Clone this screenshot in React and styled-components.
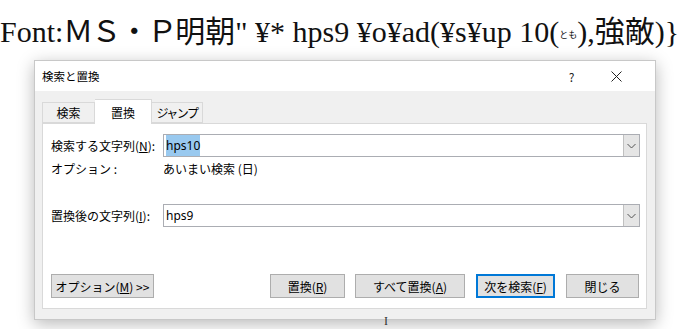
import React from "react";
import styled, { createGlobalStyle } from "styled-components";

const GlobalStyle = createGlobalStyle`
  html, body {
    margin: 0;
    padding: 0;
    background: #ffffff;
  }
  body {
    width: 681px;
    height: 329px;
    overflow: hidden;
  }
`;

const Page = styled.div`
  position: relative;
  width: 681px;
  height: 329px;
  overflow: hidden;
  background: #fff;
`;

const FieldCode = styled.div`
  height: 60px;
  box-sizing: border-box;
  padding-top: 17px;
  font-family: "Liberation Serif", "Noto Sans CJK JP", serif;
  font-size: 30px;
  line-height: 30px;
  color: #111;
  white-space: nowrap;
  overflow: hidden;
`;

const Wide = styled.span`
  letter-spacing: -2px;
`;

const Tiny = styled.span`
  font-size: 9px;
  font-family: "Noto Sans CJK JP", sans-serif;
  vertical-align: 4px;
`;

const Dialog = styled.div`
  margin-left: 34px;
  width: 622px;
  height: 260px;
  box-sizing: border-box;
  background: #f0f0f0;
  border: 1px solid #c8c8c8;
  box-shadow: 0 4px 16px rgba(0, 0, 0, 0.28);
  font-family: "Noto Sans", "Noto Sans CJK JP", sans-serif;
  font-size: 12px;
  color: #000;
  display: flex;
  flex-direction: column;
`;

const TitleBar = styled.div`
  height: 30px;
  background: #fff;
  display: flex;
  align-items: center;
  padding-left: 7px;
  padding-right: 16px;
  font-family: "Noto Sans CJK JP", sans-serif;
  font-size: 11.5px;
`;

const Title = styled.span`
  flex: 1;
`;

const TitleButton = styled.span`
  width: 45px;
  display: flex;
  justify-content: center;
  align-items: center;
  font-size: 12px;
  color: #222;
`;

const Body = styled.div`
  padding: 8px 8px 0 7px;
`;

const Tabs = styled.div`
  display: flex;
  align-items: flex-end;
  height: 24px;
`;

const Tab = styled.div`
  width: ${p => p.$w}px;
  height: ${p => (p.$active ? 25 : 21)}px;
  box-sizing: border-box;
  margin-bottom: ${p => (p.$active ? -1 : 0)}px;
  background: ${p => (p.$active ? "#fff" : "#f0f0f0")};
  border: 1px solid #d9d9d9;
  border-bottom: ${p => (p.$active ? "none" : "1px solid #d9d9d9")};
  border-left: ${p => (p.$noLeft ? "none" : "1px solid #d9d9d9")};
  display: flex;
  align-items: center;
  justify-content: center;
  font-family: "Noto Sans CJK JP", sans-serif;
  font-size: 12px;
  letter-spacing: ${p => p.$ls || 0}px;
  white-space: nowrap;
  position: relative;
  z-index: ${p => (p.$active ? 2 : 1)};
`;

const Panel = styled.div`
  height: 186px;
  box-sizing: border-box;
  background: #fff;
  border: 1px solid #d9d9d9;
  padding: 10px 6px 0 8px;
  display: flex;
  flex-direction: column;
  position: relative;
  z-index: 1;
`;

const Row = styled.div`
  display: grid;
  grid-template-columns: 112px 1fr;
  align-items: center;
  height: ${p => p.$h}px;
  margin-top: ${p => p.$mt || 0}px;
`;

const Label = styled.span`
  font-family: "Noto Sans CJK JP", sans-serif;
  font-size: 12px;
  white-space: nowrap;
`;

const U = styled.span`
  text-decoration: underline;
`;

const Combo = styled.div`
  height: 23px;
  box-sizing: border-box;
  border: 1px solid #abadb3;
  background: #fff;
  display: flex;
  align-items: center;
`;

const ComboText = styled.div`
  flex: 1;
  padding-left: 2px;
  font-size: 12px;
`;

const Selected = styled.span`
  background: #99c9ef;
  padding: 2px 0;
`;

const ComboArrow = styled.div`
  width: 16px;
  height: 21px;
  box-sizing: border-box;
  background: #e5e5e5;
  border-left: 1px solid #c0c0c0;
  display: flex;
  align-items: center;
  justify-content: center;
`;

const Buttons = styled.div`
  display: flex;
  align-items: center;
  margin-top: auto;
  margin-bottom: 10px;
  padding-right: 1px;
`;

const Spacer = styled.div`
  flex: 1;
`;

const Button = styled.div`
  width: ${p => p.$w}px;
  height: 24px;
  box-sizing: border-box;
  margin-left: ${p => p.$ml || 0}px;
  background: #e1e1e1;
  border: ${p => (p.$default ? "2px solid #0078d7" : "1px solid #adadad")};
  display: flex;
  align-items: center;
  justify-content: center;
  font-family: "Noto Sans CJK JP", sans-serif;
  font-size: 12px;
  white-space: nowrap;
`;

const Cursor = styled.span`
  position: absolute;
  left: 384px;
  top: 315px;
  font-family: "Liberation Serif", serif;
  font-size: 12px;
  line-height: 12px;
  color: #333;
`;

const Chevron = () => (
  <svg width="9" height="6" viewBox="0 0 9 6">
    <path d="M0.5 1 L4.5 5 L8.5 1" fill="none" stroke="#555" strokeWidth="1" />
  </svg>
);

const CloseIcon = () => (
  <svg width="11" height="11" viewBox="0 0 11 11">
    <path d="M0.5 0.5 L10.5 10.5 M10.5 0.5 L0.5 10.5" fill="none" stroke="#222" strokeWidth="1" />
  </svg>
);

const App = () => (
  <Page>
    <GlobalStyle />
    <FieldCode>
      Font:<Wide>ＭＳ・Ｐ</Wide>明朝" ¥* hps9 ¥o¥ad(¥s¥up 10(<Tiny>とも</Tiny>),強敵)}
    </FieldCode>
    <Dialog>
      <TitleBar>
        <Title>検索と置換</Title>
        <TitleButton>?</TitleButton>
        <TitleButton>
          <CloseIcon />
        </TitleButton>
      </TitleBar>
      <Body>
        <Tabs>
          <Tab $w={53}>検索</Tab>
          <Tab $w={57} $active $noLeft>置換</Tab>
          <Tab $w={51} $ls={-1.5} $noLeft>ジャンプ</Tab>
        </Tabs>
        <Panel>
          <Row $h={23}>
            <Label>
              検索する文字列(<U>N</U>):
            </Label>
            <Combo>
              <ComboText>
                <Selected>hps10</Selected>
              </ComboText>
              <ComboArrow>
                <Chevron />
              </ComboArrow>
            </Combo>
          </Row>
          <Row $h={20} $mt={1}>
            <Label>オプション :</Label>
            <Label>あいまい検索 (日)</Label>
          </Row>
          <Row $h={23} $mt={26}>
            <Label>
              置換後の文字列(<U>I</U>):
            </Label>
            <Combo>
              <ComboText>hps9</ComboText>
              <ComboArrow>
                <Chevron />
              </ComboArrow>
            </Combo>
          </Row>
          <Buttons>
            <Button $w={103}>
              オプション(<U>M</U>) &gt;&gt;
            </Button>
            <Spacer />
            <Button $w={75}>
              置換(<U>R</U>)
            </Button>
            <Button $w={110} $ml={10}>
              すべて置換(<U>A</U>)
            </Button>
            <Button $w={79} $default $ml={11}>
              次を検索(<U>F</U>)
            </Button>
            <Button $w={73} $ml={11}>
              閉じる
            </Button>
          </Buttons>
        </Panel>
      </Body>
    </Dialog>
    <Cursor>I</Cursor>
  </Page>
);

export default App;
